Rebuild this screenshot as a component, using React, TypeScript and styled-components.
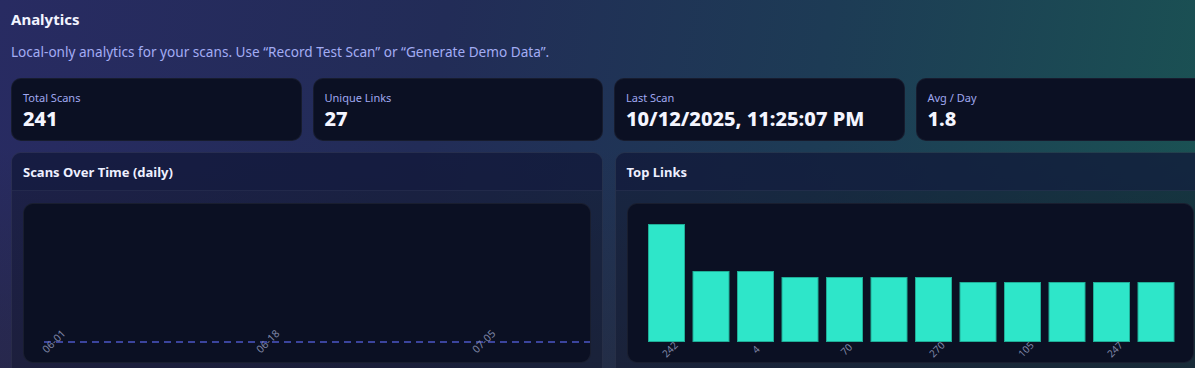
import {FC} from 'react';
import styled, {createGlobalStyle} from 'styled-components';

const GlobalStyle = createGlobalStyle`
  html, body {
    margin: 0;
    padding: 0;
    overflow: hidden;
    background: #22294f;
  }
  * {
    box-sizing: border-box;
  }
`;

const stats = [
  {label: 'Total Scans', value: '241'},
  {label: 'Unique Links', value: '27'},
  {label: 'Last Scan', value: '10/12/2025, 11:25:07 PM'},
  {label: 'Avg / Day', value: '1.8'},
];

const dailyTicks = [
  {x: 32.5, label: '06-01'},
  {x: 246.5, label: '06-18'},
  {x: 462.5, label: '07-05'},
];

const topLinks = [
  {label: '242', count: 20},
  {label: '18', count: 12},
  {label: '4', count: 12},
  {label: '91', count: 11},
  {label: '70', count: 11},
  {label: '33', count: 11},
  {label: '270', count: 11},
  {label: '12', count: 10},
  {label: '105', count: 10},
  {label: '88', count: 10},
  {label: '247', count: 10},
  {label: '6', count: 10},
];

const CHART_W = 569;
const CHART_H = 160;
const BASE_Y = 137;
const MAX_BAR = 117;

const ScansChart: FC = () => (
  <svg width={CHART_W} height={CHART_H} viewBox={`0 0 ${CHART_W} ${CHART_H}`}>
    <line
      x1={20}
      y1={138}
      x2={CHART_W}
      y2={138}
      stroke='#4c56c6'
      strokeWidth={1.6}
      strokeDasharray='7 5'
    />
    {dailyTicks.map((t) => (
      <text
        key={t.label}
        x={t.x}
        y={140}
        fill='#7f86a6'
        fontSize={10.5}
        textAnchor='middle'
        transform={`rotate(-45 ${t.x} 140)`}
      >
        {t.label}
      </text>
    ))}
  </svg>
);

const TopLinksChart: FC = () => {
  const max = Math.max(...topLinks.map((l) => l.count));
  return (
    <svg width={CHART_W} height={CHART_H} viewBox={`0 0 ${CHART_W} ${CHART_H}`}>
      {topLinks.map((l, i) => {
        const h = Math.round((l.count / max) * MAX_BAR);
        const x = 20 + i * 44.5;
        return (
          <rect
            key={i}
            x={x + 0.5}
            y={BASE_Y - h + 0.5}
            width={36}
            height={h}
            fill='#2ee6c9'
            stroke='#1fae97'
            strokeWidth={1}
          />
        );
      })}
      {topLinks.map((l, i) => {
        if (i % 2) return null;
        const cx = 20 + i * 44.5 + 18.5 + 3 + 1.5 * (l.label.length - 1);
        const cy = BASE_Y + 11;
        return (
          <text
            key={l.label}
            x={cx}
            y={cy}
            fill='#7f86a6'
            fontSize={10}
            textAnchor='middle'
            transform={`rotate(-45 ${cx} ${cy})`}
          >
            {l.label}
          </text>
        );
      })}
    </svg>
  );
};

const App: FC = () => (
  <Page>
    <GlobalStyle />
    <Content>
      <Title>Analytics</Title>
      <Subtitle>
        Local-only analytics for your scans. Use “Record Test Scan” or “Generate Demo Data”.
      </Subtitle>
      <StatGrid>
        {stats.map((s) => (
          <StatCard key={s.label}>
            <StatLabel>{s.label}</StatLabel>
            <StatValue>{s.value}</StatValue>
          </StatCard>
        ))}
      </StatGrid>
      <PanelGrid>
        <Panel>
          <PanelHeader>
            <PanelTitle>Scans Over Time (daily)</PanelTitle>
          </PanelHeader>
          <PanelBody>
            <ChartBox>
              <ScansChart />
            </ChartBox>
          </PanelBody>
        </Panel>
        <Panel>
          <PanelHeader>
            <PanelTitle>Top Links</PanelTitle>
          </PanelHeader>
          <PanelBody>
            <ChartBox>
              <TopLinksChart />
            </ChartBox>
          </PanelBody>
        </Panel>
      </PanelGrid>
    </Content>
  </Page>
);

const Page = styled.div`
  width: 1217px;
  height: 368px;
  overflow: hidden;
  padding: 9px 11px 0;
  font-family: 'Segoe UI', 'Noto Sans', 'Open Sans', sans-serif;
  color: #eef0ff;
  background:
    linear-gradient(180deg, rgba(0, 0, 0, 0) 40%, rgba(40, 36, 52, 0.45) 100%),
    linear-gradient(100deg, #282b62 0%, #222c57 35%, #1d3b55 65%, #1a5453 100%);
`;

const Content = styled.div`
  width: 1195px;
  display: flex;
  flex-direction: column;
`;

const Title = styled.h1`
  margin: 0;
  font-size: 15px;
  line-height: 20px;
  font-weight: 700;
  color: #f2f4ff;
`;

const Subtitle = styled.p`
  margin: 13px 0 0;
  font-size: 13.6px;
  line-height: 20px;
  color: #a3acf4;
`;

const StatGrid = styled.div`
  display: grid;
  grid-template-columns: repeat(4, 1fr);
  gap: 11px;
  margin-top: 16px;
`;

const StatCard = styled.div`
  height: 63px;
  padding: 12px 11px;
  border-radius: 10px;
  background: #0b1023;
  border: 1px solid rgba(255, 255, 255, 0.05);
  display: flex;
  flex-direction: column;
  gap: 3px;
`;

const StatLabel = styled.div`
  font-size: 11px;
  line-height: 14px;
  color: #a0a8f0;
`;

const StatValue = styled.div`
  font-size: 20px;
  line-height: 22px;
  font-weight: 800;
  color: #f4f5ff;
`;

const PanelGrid = styled.div`
  display: grid;
  grid-template-columns: 1fr 1fr;
  gap: 12px;
  margin-top: 11px;
`;

const Panel = styled.section`
  border-radius: 10px;
  border: 1px solid rgba(255, 255, 255, 0.06);
  background: rgba(14, 18, 40, 0.42);
  overflow: hidden;
`;

const PanelHeader = styled.header`
  height: 38px;
  display: flex;
  align-items: center;
  padding: 0 11px;
  background: rgba(18, 26, 62, 0.55);
  border-bottom: 1px solid rgba(255, 255, 255, 0.06);
`;

const PanelTitle = styled.h2`
  margin: 0;
  font-size: 13px;
  font-weight: 700;
  color: #eef0ff;
`;

const PanelBody = styled.div`
  padding: 12px 11px;
`;

const ChartBox = styled.div`
  height: ${CHART_H}px;
  border-radius: 10px;
  background: #0b1023;
  border: 1px solid rgba(255, 255, 255, 0.06);
  overflow: hidden;

  svg {
    display: block;
    font-family: 'Segoe UI', 'Noto Sans', sans-serif;
  }
`;

export default App;
